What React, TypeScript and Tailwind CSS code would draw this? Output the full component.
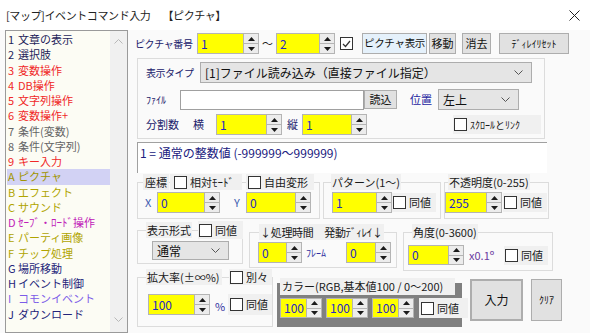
import React from "react";

type P = { className?: string; children?: React.ReactNode };

const items: [string, string, string][] = [
  ["1", "文章の表示", "text-[#1e1e5a]"],
  ["2", "選択肢", "text-[#1e1e5a]"],
  ["3", "変数操作", "text-[#f02828]"],
  ["4", "DB操作", "text-[#f02828]"],
  ["5", "文字列操作", "text-[#f02828]"],
  ["6", "変数操作+", "text-[#f02828]"],
  ["7", "条件(変数)", "text-[#646464]"],
  ["8", "条件(文字列)", "text-[#646464]"],
  ["9", "キー入力", "text-[#f02828]"],
  ["A", "ピクチャ", "text-[#a09400]"],
  ["B", "エフェクト", "text-[#b0a400]"],
  ["C", "サウンド", "text-[#b0a400]"],
  ["D", "ｾｰﾌﾞ・ﾛｰﾄﾞ操作", "text-[#c020b8]"],
  ["E", "パーティ画像", "text-[#b0a400]"],
  ["F", "チップ処理", "text-[#b0a400]"],
  ["G", "場所移動", "text-[#24247a]"],
  ["H", "イベント制御", "text-[#24247a]"],
  ["I", "コモンイベント", "text-[#7c5ce8]"],
  ["J", "ダウンロード", "text-[#24247a]"],
];

function Tri({ up }: { up?: boolean }) {
  return (
    <svg width="7" height="4" viewBox="0 0 7 4">
      <polygon points={up ? "0,4 7,4 3.5,0" : "0,0 7,0 3.5,4"} fill="#1a1a1a" />
    </svg>
  );
}

function Spin() {
  return (
    <div className="flex flex-col w-[15px] self-stretch border-l border-[#b4b4b4] bg-[#ececec]">
      <div className="flex-1 flex items-center justify-center border-b border-[#b4b4b4]">
        <Tri up />
      </div>
      <div className="flex-1 flex items-center justify-center">
        <Tri />
      </div>
    </div>
  );
}

function Num({ value, w, h = "h-[21px]" }: { value: string; w: string; h?: string }) {
  return (
    <div className={`flex shrink-0 ${h} border border-[#b4b4b4]`}>
      <div className={`${w} bg-[#ffff00] text-[#2626c8] flex items-center pl-[3px] text-[12px]`}>{value}</div>
      <Spin />
    </div>
  );
}

function Box({ checked }: { checked?: boolean }) {
  return (
    <div className="w-[13px] h-[13px] shrink-0 border border-[#333333] bg-white flex items-center justify-center">
      {checked && (
        <svg width="9" height="8" viewBox="0 0 9 8">
          <polyline points="1,4 3.5,6.5 8,1" fill="none" stroke="#333333" strokeWidth="1.2" />
        </svg>
      )}
    </div>
  );
}

function Check({ label, className = "" }: { label: string; className?: string }) {
  return (
    <div className={`flex items-center gap-[3px] bg-[#f0f0f0] shrink-0 ${className}`}>
      <Box />
      <span>{label}</span>
    </div>
  );
}

function Chevron() {
  return (
    <svg width="9" height="5" viewBox="0 0 9 5">
      <polyline points="0.5,0.5 4.5,4.5 8.5,0.5" fill="none" stroke="#555555" strokeWidth="1" />
    </svg>
  );
}

function Combo({ text, className = "" }: { text: string; className?: string }) {
  return (
    <div className={`flex items-center justify-between shrink-0 bg-[#e5e5e5] border border-[#adadad] pl-[4px] pr-[8px] text-[#111111] text-[12px] ${className}`}>
      <span>{text}</span>
      <Chevron />
    </div>
  );
}

function Btn({ className = "", children }: P) {
  return (
    <div className={`flex items-center justify-center shrink-0 bg-[#e1e1e1] border border-[#adadad] text-[#111111] ${className}`}>
      {children}
    </div>
  );
}

function Group({ className = "", children }: P) {
  return <div className={`shrink-0 border border-[#dcdcdc] flex flex-col ${className}`}>{children}</div>;
}

function Head({ className = "", children }: P) {
  return <div className={`-mt-[9px] h-[16px] flex items-center text-[#1a1a1a] ${className}`}>{children}</div>;
}

export default function App() {
  return (
    <div className="w-[590px] h-[333px] overflow-hidden bg-[#fafafa] text-[11px] leading-none whitespace-nowrap font-['Noto_Sans_CJK_JP',sans-serif] text-[#1a1a1a]">
      {/* title bar */}
      <div className="h-[30px] flex items-center pl-[6px] bg-white text-[11px] tracking-[-0.4px] text-[#222222]">
        <span>[マップ]イベントコマンド入力</span>
        <span className="ml-[12px]">【ピクチャ】</span>
        <svg className="ml-auto mr-[10px]" width="11" height="11" viewBox="0 0 11 11">
          <path d="M0.5 0.5 L10.5 10.5 M10.5 0.5 L0.5 10.5" stroke="#222222" strokeWidth="1" />
        </svg>
      </div>

      <div className="flex h-[303px]">
        {/* command list */}
        <div className="ml-[5px] w-[123px] h-[303px] border border-[#9a9a9a] bg-[#fcfcf4] flex shrink-0">
          <div className="w-[104px] pt-[1px] pl-[1px]">
            {items.map(([n, t, c], i) => (
              <div key={n} className={`h-[15.25px] leading-[15.25px] pl-[1px] text-[11px] flex ${c} ${i === 9 ? "bg-[#d2d2f4]" : ""}`}>
                <span className="w-[10px]">{n}</span>
                <span>{t}</span>
              </div>
            ))}
          </div>
          <div className="w-[17px] bg-[#f0f0f0] flex flex-col items-center justify-between pt-[8px] pb-[10px]">
            <svg width="9" height="5" viewBox="0 0 9 5">
              <polyline points="0.5,4.5 4.5,0.5 8.5,4.5" fill="none" stroke="#b8b8b8" strokeWidth="1" />
            </svg>
            <svg width="9" height="5" viewBox="0 0 9 5">
              <polyline points="0.5,0.5 4.5,4.5 8.5,0.5" fill="none" stroke="#b8b8b8" strokeWidth="1" />
            </svg>
          </div>
        </div>

        {/* right pane */}
        <div className="ml-[6px] w-[452px] flex flex-col">
          {/* row 1 */}
          <div className="mt-[3px] h-[21px] flex items-center">
            <span className="ml-[1px] w-[62px] text-[10px] tracking-[-0.4px] text-[#20206a]">ピクチャ番号</span>
            <Num value="1" w="w-[45px]" />
            <span className="w-[17px] text-center">～</span>
            <Num value="2" w="w-[42px]" />
            <div className="ml-[5px]">
              <Box checked />
            </div>
            <Btn className="ml-[9px] w-[65px] h-[21px] bg-[#e5f1fb] border-[#0078d7] text-[10.5px] tracking-[-0.3px]">ピクチャ表示</Btn>
            <Btn className="ml-[2px] w-[27px] h-[21px]">移動</Btn>
            <Btn className="ml-[6px] w-[29px] h-[21px]">消去</Btn>
            <Btn className="ml-[8px] w-[70px] h-[21px] text-[10px]">ﾃﾞｨﾚｲﾘｾｯﾄ</Btn>
          </div>

          {/* display type group */}
          <Group className="mt-[4px] ml-[3px] w-[408px] h-[81px]">
            <div className="mt-[3px] h-[21px] flex items-center">
              <span className="ml-[8px] w-[54px] text-[10px] tracking-[-0.5px] text-[#20206a]">表示タイプ</span>
              <Combo text="[1]ファイル読み込み（直接ファイル指定）" className="w-[332px] h-[21px]" />
            </div>
            <div className="mt-[6px] h-[21px] flex items-center">
              <span className="ml-[8px] w-[34px] text-[10px] text-[#20206a]">ﾌｧｲﾙ</span>
              <div className="w-[184px] h-[20px] bg-white border border-[#a0a0a0] shrink-0" />
              <Btn className="w-[33px] h-[19px]">読込</Btn>
              <span className="ml-[13px] w-[28px] text-[#2424a0]">位置</span>
              <Combo text="左上" className="w-[81px] h-[21px]" />
            </div>
            <div className="mt-[4px] h-[21px] flex items-center">
              <span className="ml-[8px] w-[47px] text-[#20206a]">分割数</span>
              <span className="w-[23px] text-[#20206a]">横</span>
              <Num value="1" w="w-[49px]" />
              <span className="ml-[5px] w-[15px] text-[#20206a]">縦</span>
              <Num value="1" w="w-[48px]" />
              <Check label="ｽｸﾛｰﾙとﾘﾝｸ" className="ml-[86px] w-[88px] h-[19px] pl-[1px] text-[10px]" />
            </div>
          </Group>

          {/* info text */}
          <div className="mt-[3px] ml-[3px] w-[410px] h-[31px] shrink-0 border-t border-l border-[#a0a0a0] bg-white pt-[4px] pl-[2px] text-[12px] text-[#202080]">
            1 = 通常の整数値 (-999999～999999)
          </div>

          {/* row 2 groups */}
          <div className="ml-[3px] flex items-start">
            <Group className="mt-[9px] w-[183px] h-[37px]">
              <Head className="ml-[5px]">
                <span className="bg-[#f0f0f0] h-[16px] px-[2px] flex items-center">座標</span>
                <Check label="相対ﾓｰﾄﾞ" className="ml-[1px] h-[16px] w-[72px] pl-[4px]" />
                <Check label="自由変形" className="ml-[4px] h-[16px] w-[68px] pl-[2px]" />
              </Head>
              <div className="mt-[2px] h-[21px] flex items-center">
                <span className="ml-[7px] w-[12px] text-[#3c5ab0]">X</span>
                <Num value="0" w="w-[46px]" />
                <span className="ml-[14px] w-[12px] text-[#3c5ab0]">Y</span>
                <Num value="0" w="w-[48px]" />
              </div>
            </Group>
            <Group className="mt-[9px] ml-[3px] w-[118px] h-[37px]">
              <Head className="ml-[7px]">
                <span className="bg-[#f0f0f0] h-[16px] px-[1px] flex items-center">パターン(1～)</span>
              </Head>
              <div className="mt-[2px] h-[21px] flex items-center">
                <div className="ml-[8px]">
                  <Num value="1" w="w-[43px]" />
                </div>
                <Check label="同値" className="h-[19px] w-[44px] pl-[1px]" />
              </div>
            </Group>
            <Group className="mt-[9px] ml-[3px] w-[105px] h-[37px]">
              <Head className="ml-[3px]">
                <span className="bg-[#f0f0f0] h-[16px] px-[1px] flex items-center">不透明度(0-255)</span>
              </Head>
              <div className="mt-[2px] h-[21px] flex items-center">
                <Num value="255" w="w-[40px]" />
                <Check label="同値" className="ml-[1px] h-[19px] w-[44px] pl-[1px]" />
              </div>
            </Group>
          </div>

          {/* row 3 groups */}
          <div className="ml-[3px] flex items-start">
            <Group className="mt-[11px] w-[106px] h-[34px]">
              <Head className="ml-[8px]">
                <span className="bg-[#f0f0f0] h-[16px] px-[1px] flex items-center">表示形式</span>
                <Check label="同値" className="ml-[6px] h-[18px] w-[45px] pl-[1px]" />
              </Head>
              <Combo text="通常" className="mt-[3px] ml-[14px] w-[77px] h-[19px]" />
            </Group>
            <Group className="mt-[13px] ml-[6px] w-[148px] h-[36px]">
              <Head className="ml-[9px]">
                <span className="bg-[#f0f0f0] h-[16px] px-[1px] flex items-center tracking-[-0.3px]">
                  ↓処理時間　発動ﾃﾞｨﾚｲ↓
                </span>
              </Head>
              <div className="mt-[2px] h-[21px] flex items-center">
                <div className="ml-[8px]">
                  <Num value="0" w="w-[27px]" />
                </div>
                <span className="ml-[4px] w-[40px] text-[10px] text-[#3030a0]">ﾌﾚｰﾑ</span>
                <Num value="0" w="w-[28px]" />
              </div>
            </Group>
            <Group className="mt-[13px] ml-[6px] w-[150px] h-[39px]">
              <Head className="ml-[8px]">
                <span className="bg-[#f0f0f0] h-[16px] px-[1px] flex items-center">角度(0-3600)</span>
              </Head>
              <div className="mt-[5px] h-[20px] flex items-center">
                <div className="ml-[4px]">
                  <Num value="0" w="w-[39px]" h="h-[20px]" />
                </div>
                <span className="ml-[5px] w-[35px] text-[#6a3aa0]">x0.1º</span>
                <Check label="同値" className="h-[19px] w-[44px] pl-[1px]" />
              </div>
            </Group>
          </div>

          {/* row 4 */}
          <div className="ml-[3px] flex items-start">
            <Group className="mt-[6px] w-[136px] h-[50px]">
              <Head className="ml-[8px]">
                <span className="bg-[#f0f0f0] h-[16px] px-[1px] flex items-center w-[76px]">拡大率(±∞%)</span>
                <Check label="別々" className="ml-[7px] h-[16px] w-[43px] pl-[1px]" />
              </Head>
              <div className="mt-[9px] h-[21px] flex items-center">
                <div className="ml-[10px]">
                  <Num value="100" w="w-[45px]" />
                </div>
                <span className="ml-[5px] w-[15px] pt-[4px] text-[#3030a0]">%</span>
                <Check label="同値" className="h-[21px] w-[44px] pl-[2px]" />
              </div>
            </Group>
            <div className="mt-[12px] ml-[4px] w-[185px] h-[44px] bg-[#808080] flex flex-col shrink-0">
              <div className="-mt-[5px] ml-[3px] h-[17px] w-[175px] bg-[#f0f0f0] flex items-center pl-[2px] text-[11px] text-[#1a1a1a]">
                カラー(RGB,基本値100 / 0～200)
              </div>
              <div className="mt-[3px] ml-[3px] h-[20px] flex items-center gap-[4px]">
                <Num value="100" w="w-[25px]" h="h-[20px]" />
                <Num value="100" w="w-[25px]" h="h-[20px]" />
                <Num value="100" w="w-[25px]" h="h-[20px]" />
                <Check label="同値" className="ml-[1px] h-[20px] w-[49px] pl-[2px]" />
              </div>
            </div>
            <Btn className="mt-[8px] ml-[8px] w-[53px] h-[42px] border-2 border-[#0078d7] text-[12px]">入力</Btn>
            <Btn className="mt-[8px] ml-[8px] w-[31px] h-[42px] text-[10px]">ｸﾘｱ</Btn>
          </div>
        </div>
      </div>
    </div>
  );
}
